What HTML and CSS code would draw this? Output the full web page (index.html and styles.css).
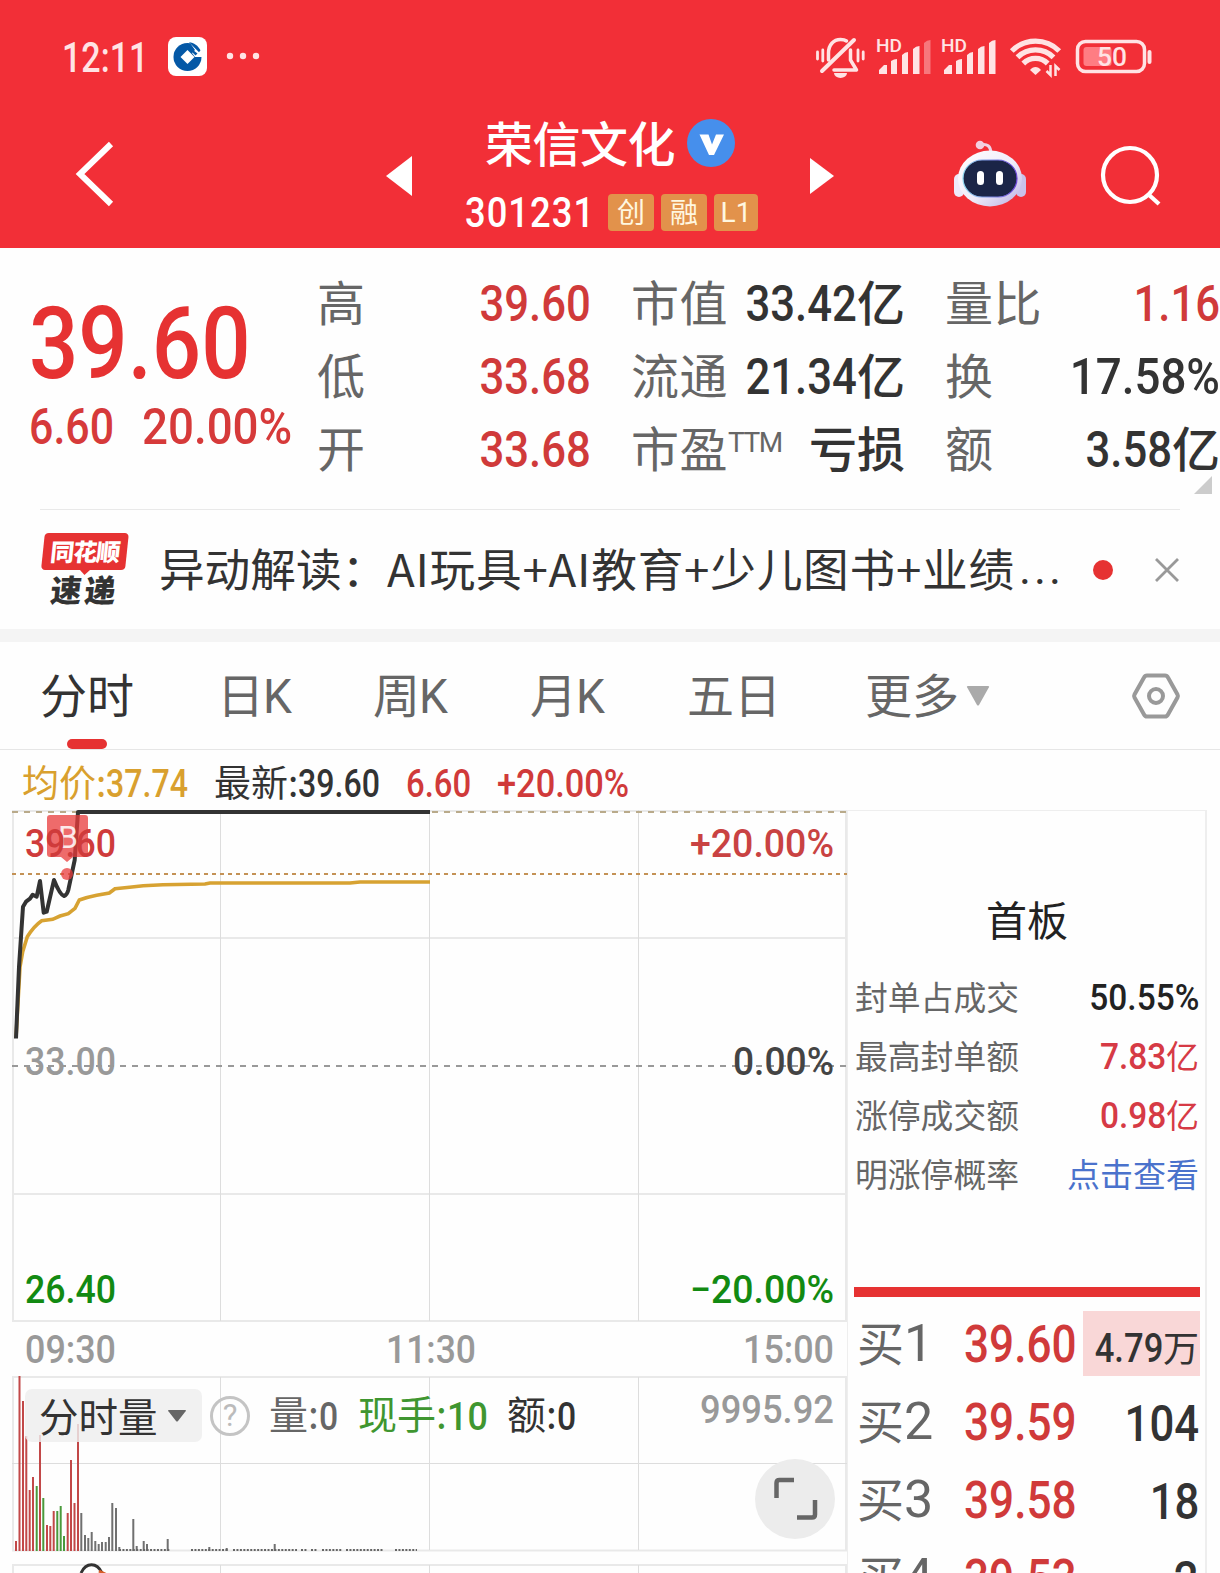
FILE: index.html
```html
<!DOCTYPE html>
<html lang="zh-CN">
<head>
<meta charset="utf-8">
<title>荣信文化 301231</title>
<link rel="stylesheet" href="styles.css">
</head>
<body>
<header class="header">
  <div class="status">
    <span class="clock"><span class="num">12:11</span></span>
    <svg class="bank" viewBox="0 0 39 39"><rect width="39" height="39" rx="8" fill="#fff"/><circle cx="19.5" cy="20" r="14" fill="#0458a6"/><path d="M19.500 13l7 7-7 7-7-7z" fill="#fff"/><path d="M20 3l15 1v16h-8l-3-4 3-3z" fill="#fff"/><path d="M21 5.300c5 .5 9 3.500 11.500 8l-1.500 2z" fill="#0458a6"/><path d="M16.500 6.500l13 10-2 2-6-6z" fill="#0458a6"/></svg>
    <svg class="dots" viewBox="0 0 34 8" fill="#ffe3e4"><circle cx="4" cy="4" r="3.200"/><circle cx="17" cy="4" r="3.200"/><circle cx="30" cy="4" r="3.200"/></svg>
    <svg class="status-icons" viewBox="0 0 340 48" fill="none" stroke="#ffe3e4">
      <g stroke-width="3.500" stroke-linecap="round"><path d="M6 36L38 5" stroke-width="4"/><path d="M12.500 25v-7c0-8 5-13.500 12-13.500q4 0 6 1.500M34.500 15v10l6 10H18" stroke-linejoin="round"/><path d="M1.500 17v7M6.800 15v11M42 15v11M47.200 17v7" stroke-width="2.800"/></g>
      <path d="M18 38h13a6.500 5 0 0 1-13 0z" fill="#ffe3e4" stroke="none"/>
      <g fill="#ffe3e4" stroke="none">
        <path d="M63 35l5-5h3v9h-8zM75 26q3-2 6-2v15h-6zM86 20q3-3 6-3v22h-6zM97 14q3-3 6.500-3v28H97z"/><path d="M108 8q3-3 6.500-3v34H108z" opacity=".4"/>
        <path d="M128 35l5-5h3v9h-8zM140 26q3-2 6-2v15h-6zM151 20q3-3 6-3v22h-6zM162 14q3-3 6.500-3v28H162zM173 8q3-3 6.500-3v34H173z"/>
      </g>
      <g fill="#ffe3e4" stroke="none" class="hd"><text x="60" y="17" textLength="26" lengthAdjust="spacingAndGlyphs">HD</text><text x="125" y="17" textLength="26" lengthAdjust="spacingAndGlyphs">HD</text></g>
      <g stroke-width="5.300"><path d="M195.800 16a33.500 33.500 0 0 1 47.400 0"/><path d="M201.500 22.300a25.500 25.500 0 0 1 36 0"/><path d="M207.300 28.500a17.300 17.300 0 0 1 24.400 0"/></g>
      <path d="M219.500 40l-5.500-5c3-4 8-4 11 0z" fill="#ffe3e4" stroke="none"/>
      <path d="M234.500 30v10l-4-4M239.500 41v-10l4 4" stroke-width="2.500"/>
      <rect x="261.500" y="6.500" width="67" height="30" rx="8" stroke-width="3.500"/>
      <rect x="267.500" y="12" width="28" height="19" rx="3" fill="#ff7d83" stroke="none"/>
      <path d="M333.500 17v10" stroke-width="4" stroke-linecap="round"/>
      <text class="battery" x="281" y="31" textLength="30" lengthAdjust="spacingAndGlyphs" fill="#ffe3e4" stroke="none">50</text>
    </svg>
  </div>
  <nav class="nav">
    <svg class="back" viewBox="0 0 40 66"><path d="M36 3L5 33l31 30" fill="none" stroke="#fff" stroke-width="6"/></svg>
    <svg class="prev" viewBox="0 0 26 40"><path d="M26 0v40L0 20z" fill="#fff"/></svg>
    <div class="stock">
      <div class="stock-name"><span>荣信文化</span><svg viewBox="0 0 48 48"><circle cx="24" cy="24" r="24" fill="#468fec"/><path d="M12.500 15.500h9l3.500 10 4-10h8L27 36h-5z" fill="#fff"/></svg></div>
      <div class="stock-code"><span class="code"><span class="num">301231</span></span><i>创</i><i>融</i><i class="level">L1</i></div>
    </div>
    <svg class="next" viewBox="0 0 24 36"><path d="M0 0v36l24-18z" fill="#fff"/></svg>
    <svg class="robot" viewBox="0 0 72 68">
      <defs><linearGradient id="shell" x1="0" y1="0" x2="1" y2="1"><stop offset="0" stop-color="#fff"/><stop offset=".55" stop-color="#f0ecfa"/><stop offset="1" stop-color="#b7aee2"/></linearGradient><linearGradient id="rim" x1="0" y1="0" x2="1" y2="0"><stop offset="0" stop-color="#8fd8f0"/><stop offset="1" stop-color="#6a42d8"/></linearGradient></defs>
      <path d="M26 5c7-2 11 1 11 9" fill="none" stroke="#efd3e6" stroke-width="3"/><circle cx="26" cy="5" r="4.300" fill="#f3cfe0"/>
      <rect x="0" y="34" width="10" height="23" rx="5" fill="#eee9fa"/><rect x="62" y="34" width="10" height="23" rx="5" fill="#c9c2ea"/>
      <ellipse cx="36" cy="38.500" rx="32" ry="28" fill="url(#shell)"/>
      <rect x="9" y="20" width="54" height="37" rx="19" fill="#1b2547" stroke="url(#rim)" stroke-width="1.200"/>
      <rect x="23" y="31" width="7" height="14" rx="3.500" fill="#fff"/><rect x="42" y="31" width="7" height="14" rx="3.500" fill="#fff"/>
    </svg>
    <svg class="search" viewBox="0 0 62 62" fill="none" stroke="#fff" stroke-width="4.200"><circle cx="30" cy="30" r="27"/><path d="M48 49l11 10"/></svg>
  </nav>
</header>

<section class="quote">
  <div class="last">
    <div class="price"><span class="num">39.60</span></div>
    <div class="change"><span class="num delta">6.60</span><span class="num wide">20.00%</span></div>
  </div>
  <dl class="facts">
    <dt>高</dt><dd class="up"><span class="num">39.60</span></dd><dt>市值</dt><dd><span class="num">33.42</span>亿</dd><dt>量比</dt><dd class="up"><span class="num">1.16</span></dd>
    <dt>低</dt><dd class="up"><span class="num">33.68</span></dd><dt>流通</dt><dd><span class="num">21.34</span>亿</dd><dt>换</dt><dd><span class="num wide">17.58%</span></dd>
    <dt>开</dt><dd class="up"><span class="num">33.68</span></dd><dt>市盈<sup>TTM</sup></dt><dd>亏损</dd><dt>额</dt><dd><span class="num">3.58</span>亿</dd>
  </dl>
  <svg class="corner" viewBox="0 0 18 18"><path d="M18 0v18H0z" fill="#ccc"/></svg>
</section>

<section class="news">
  <div class="brand"><b>同花顺</b><strong>速递</strong></div>
  <p><span class="topic">异动解读：</span><span class="reason">AI玩具+AI教育+少儿图书+业绩</span><span class="etc">...</span></p>
  <span class="unread"></span>
  <svg class="close" viewBox="0 0 26 26"><path d="M2 2l22 22M24 2L2 24" stroke="#999" stroke-width="2.800"/></svg>
</section>

<nav class="tabs">
  <span class="active">分时</span><span>日<em>K</em></span><span>周<em>K</em></span><span>月<em>K</em></span><span>五日</span><span>更多</span>
  <svg class="more" viewBox="0 0 22 20"><path d="M1 0h20q2 0 .5 2L12 19q-1 1-2 0L.5 2Q-1 0 1 0z" fill="#aaa"/></svg>
  <svg class="settings" viewBox="0 0 48 46" fill="none" stroke="#999" stroke-width="4"><path d="M15 2.500h18q2 0 3 2l9.500 17q.8 1.500 0 3L36 41.500q-1 2-3 2H15q-2 0-3-2L2.500 24.500q-.8-1.500 0-3L12 4.500q1-2 3-2z"/><circle cx="24" cy="23" r="7"/></svg>
</nav>

<div class="summary">
  <span class="avg">均价:<span class="num">37.74</span></span>
  <span class="now">最新:<span class="num">39.60</span></span>
  <span class="up diff"><span class="num">6.60</span></span>
  <span class="up"><span class="num wide">+20.00%</span></span>
</div>

<main class="board">
  <section class="charts">
    <svg class="plot" width="847" height="763" viewBox="0 810 847 763">
      <g fill="none" stroke="#e9e9e9" stroke-width="2">
        <path d="M12 811h835M12 938h835M12 1194h835M12 1321h835M12 1377h835M12 1550.500h835M12 1565h835"/>
        <path d="M13 810v511M13 1377v173M13 1564v9M846 810v511M846 1377v173M846 1564v9"/>
        <path d="M220.500 810v511M429.500 810v511M638.500 810v511M220.500 1377v173M429.500 1377v173M638.500 1377v173M220.500 1565v8M429.500 1565v8M638.500 1565v8M12 1463.500h835" stroke="#ddd" stroke-width="1"/>
      </g>
      <path d="M12 812h835" stroke="#b9aa8a" stroke-width="2" stroke-dasharray="6 6"/>
      <path d="M12 874h835" stroke="#c39155" stroke-width="2" stroke-dasharray="4 4"/>
      <path d="M12 1066h835" stroke="#999" stroke-width="2" stroke-dasharray="6 6"/>
      <g class="volume" fill="none" stroke-width="2">
        <path stroke="#c24848" d="M16 1551v-10M19.500 1551v-175M23 1551v-150M26.300 1551v-115M29.700 1551v-61M33 1551v-74M40 1551v-116M47 1551v-26M50.300 1551v-25M53.700 1551v-40M67.700 1551v-38M71 1551v-91M74.500 1551v-48M78 1551v-127"/>
        <path stroke="#4a9a3c" d="M36.700 1551v-65M43.300 1551v-53M57.300 1551v-40M60.700 1551v-45M64 1551v-15"/>
        <path stroke="#707070" d="M81.300 1551v-38M85 1551v-16M88.300 1551v-13M91.700 1551v-19M95.300 1551v-10M98.700 1551v-7M102 1551v-9M105.700 1551v-9M109 1551v-14M112.300 1551v-48M116 1551v-43M119.300 1551v-4M133.300 1551v-32M136.700 1551v-5M143.700 1551v-10M147 1551v-7M167.700 1551v-12M209.300 1551v-4M226.700 1551v-3M274.700 1551v-7"/>
        <path stroke="#666" d="M119 1550h51M191 1550h37M233 1550h64M301 1550h6M311 1550h6M322 1550h20M346 1550h37M395 1550h22" stroke-dasharray="2 1.450"/>
      </g>
      <path d="M16 1038L20 967L22.700 951.700L27.300 936.700Q34 926 41.700 920.700L52.700 919.300L60 916L68.300 913.700L75 908.300L79.300 900Q88 897 96.700 895.300L109.300 893L115 888.700Q130 887 143.300 885.700L163 884.700L205 884L210 883H350L360 882H430" fill="none" stroke="#d7a232" stroke-width="3.600"/>
      <path d="M16 1038.500L19 967L23 906.700L26 901.700L30 898.700L32.700 894.700L36.700 896.700L40 881L43.700 912.700L46.700 911.700L54 880Q60 895 64 896Q67 895 68.300 890L74.700 860L78 812H430" fill="none" stroke="#333" stroke-width="4" stroke-linejoin="round"/>
      <path d="M81 1573c5-11 16-11 21 0" fill="none" stroke="#333" stroke-width="3"/><path d="M99 1571l8 4" stroke="#d75d28" stroke-width="3"/>
      <g fill="#e93a3a" opacity=".75"><path d="M50 815h35q3 0 3 3v36q0 3-3 3h-12l-6 5-6-5H50q-3 0-3-3v-36q0-3 3-3z"/><circle cx="67" cy="874" r="6"/></g>
      <text x="58" y="848" font-size="32" fill="#fff" opacity=".85">B</text>
      <g class="axis">
        <text x="25" y="857" textLength="91" lengthAdjust="spacingAndGlyphs" fill="#cf3b3b">39.60</text>
        <text x="25" y="1075" textLength="91" lengthAdjust="spacingAndGlyphs" fill="#999">33.00</text>
        <text x="25" y="1303" textLength="91" lengthAdjust="spacingAndGlyphs" fill="#128a12">26.40</text>
        <text x="690" y="857" textLength="144" lengthAdjust="spacingAndGlyphs" fill="#c94242">+20.00%</text>
        <text x="733" y="1075" textLength="101" lengthAdjust="spacingAndGlyphs" fill="#444">0.00%</text>
        <text x="690" y="1303" textLength="144" lengthAdjust="spacingAndGlyphs" fill="#128a12">−20.00%</text>
        <g fill="#999"><text x="25" y="1363" textLength="91" lengthAdjust="spacingAndGlyphs">09:30</text><text x="386" y="1363" textLength="90" lengthAdjust="spacingAndGlyphs">11:30</text><text x="743" y="1363" textLength="91" lengthAdjust="spacingAndGlyphs">15:00</text><text x="700" y="1423" textLength="134" lengthAdjust="spacingAndGlyphs">9995.92</text></g>
      </g>
      <circle cx="795" cy="1499" r="40" fill="#ececec"/><path d="M776.500 1498v-15q0-3 3-3H794M797 1517.500h15q3 0 3-3V1500" fill="none" stroke="#666" stroke-width="4.500"/>
    </svg>
    <div class="indicator">
      <span class="chip"><span>分时量</span><svg viewBox="0 0 18 12"><path d="M1 0h16q2 0 0 2l-7 9q-1 1-2 0L1 2Q-1 0 1 0z" fill="#666"/></svg></span>
      <span class="help">?</span>
      <span class="vol">量:<span class="num">0</span></span>
      <span class="hand">现手:<span class="num">10</span></span>
      <span class="amount">额:<span class="num">0</span></span>
    </div>
  </section>
  <aside class="side">
    <h2>首板</h2>
    <dl class="limit">
      <dt>封单占成交</dt><dd><span class="num">50.55%</span></dd>
      <dt>最高封单额</dt><dd class="hot"><span class="num">7.83</span>亿</dd>
      <dt>涨停成交额</dt><dd class="hot"><span class="num">0.98</span>亿</dd>
      <dt>明涨停概率</dt><dd class="link">点击查看</dd>
    </dl>
    <div class="orders">
      <div class="order"><span class="lv">买<em>1</em></span><span class="bid"><span class="num">39.60</span></span><span class="qty big"><span class="num">4.79</span>万</span></div>
      <div class="order"><span class="lv">买<em>2</em></span><span class="bid"><span class="num">39.59</span></span><span class="qty"><span class="num">104</span></span></div>
      <div class="order"><span class="lv">买<em>3</em></span><span class="bid"><span class="num">39.58</span></span><span class="qty"><span class="num">18</span></span></div>
      <div class="order"><span class="lv">买<em>4</em></span><span class="bid"><span class="num">39.53</span></span><span class="qty"><span class="num">2</span></span></div>
    </div>
  </aside>
</main>
</body>
</html>
```
FILE: styles.css
```css
* { box-sizing: border-box; margin: 0; padding: 0; }
body { width: 1220px; height: 1573px; overflow: hidden; background: #fefefe; color: #333; font-family: "Noto Sans CJK SC", sans-serif; }
svg { display: block; flex: none; overflow: visible; }
i, em { font-style: normal; }
.num { display: inline-block; font-family: Roboto, sans-serif; font-weight: 500; transform: scaleX(.865); transform-origin: 0 50%; white-space: nowrap; }
.num.wide { transform: scaleX(.905); }
.up { color: #d03a3a; }

.header { height: 248px; background: #f22f37; color: #fff; }
.status { display: flex; align-items: center; height: 112px; padding-left: 62px; }
.clock { display: flex; width: 106px; padding-top: 4px; font-size: 42px; line-height: 42px; color: #ffe3e4; }
.clock .num { transform: scaleX(.81); }
.bank { width: 39px; height: 39px; }
.dots { width: 34px; height: 8px; margin-left: 19px; }
.status-icons { width: 340px; height: 48px; margin: 6px 0 0 556px; }
.hd { font: 500 18px Roboto, sans-serif; }
.battery { font: 500 26px Roboto, sans-serif; }
.nav { display: flex; height: 136px; }
.back { width: 40px; height: 66px; margin: 29px 0 0 75px; }
.prev { width: 26px; height: 40px; margin: 44px 0 0 271px; }
.stock { width: 345px; margin-left: 53px; }
.stock-name { display: flex; align-items: center; gap: 12px; height: 62px; padding-left: 20px; font-size: 48px; line-height: 62px; font-weight: 500; }
.stock-name span { width: 190px; margin-top: -4px; letter-spacing: -.5px; }
.stock-name svg { width: 48px; height: 48px; }
.stock-code { display: flex; align-items: center; gap: 7px; height: 76px; }
.code { display: flex; width: 136px; padding-top: 2px; font-size: 42px; line-height: 76px; }
.code .num { letter-spacing: 1.2px; }
.stock-code i { width: 46px; height: 37px; border-radius: 4px; background: #e2924b; color: #fff7e0; text-align: center; font-size: 28px; line-height: 34px; }
.stock-code .level { width: 44px; font-family: Roboto, sans-serif; line-height: 37px; }
.next { width: 24px; height: 36px; margin: 46px 0 0 0; }
.robot { width: 72px; height: 68px; margin: 28px 0 0 120px; }
.search { width: 62px; height: 62px; margin: 33px 0 0 74px; }

.quote { position: relative; display: flex; height: 261px; }
.last { width: 318px; padding: 44px 0 0 29px; color: #e63232; }
.price { display: flex; font-size: 101px; line-height: 104px; }
.price .num { transform: scaleX(.86); }
.change { display: flex; padding-top: 1px; font-size: 50.500px; line-height: 60px; color: #d63a3a; }
.delta { width: 113px; transform: scaleX(.85); }
.facts { display: grid; grid-template-columns: 110px 164px 196px 118px 160px 155px; grid-auto-rows: 73px; height: 240px; padding-top: 17px; font-size: 48px; line-height: 73px; }
.facts dt:nth-of-type(3n+2), .facts dt:nth-of-type(3n) { padding-left: 40px; letter-spacing: .5px; }
.facts dt { color: #666; white-space: nowrap; }
.facts dt, .facts dd { margin-top: -1px; }
.facts dd { display: flex; justify-content: flex-end; font-weight: 500; white-space: nowrap; }
.facts .num { padding-top: 3px; font-size: 50.500px; line-height: 73px; transform-origin: 100% 50%; }
.facts sup { display: inline-block; font: 28px/28px Roboto, sans-serif; letter-spacing: -1.5px; vertical-align: 15px; }
.corner { position: absolute; left: 1194px; top: 228px; width: 18px; height: 18px; }

.news { display: flex; align-items: center; height: 120px; margin: 0 40px; border-top: 1px solid #e9e9e9; }
.brand { width: 84px; height: 74px; margin: 0 34px 0 1px; transform: skewX(-6deg); text-align: center; }
.brand b { position: relative; display: block; height: 37px; border-radius: 4px; background: #e63232; color: #fff; font-size: 24px; font-weight: 900; line-height: 36px; letter-spacing: -1px; }
.brand b::after { content: ""; position: absolute; left: 38px; top: 36px; border: 6px solid transparent; border-top-color: #e63232; border-bottom: 0; }
.brand strong { display: block; padding-left: 8px; font-size: 31px; font-weight: 900; line-height: 38px; letter-spacing: 3px; }
.news p { display: flex; width: 935px; margin-top: -1px; font-size: 45.700px; line-height: 60px; white-space: nowrap; }
.topic { width: 228px; }
.reason { width: 632px; letter-spacing: .75px; }
.etc { font-family: Roboto, sans-serif; line-height: 64px; letter-spacing: 3px; }
.unread { width: 20px; height: 20px; border-radius: 50%; background: #e63232; }
.close { width: 26px; height: 26px; margin-left: 41px; }

.tabs { display: flex; height: 121px; border-top: 13px solid #f4f4f4; border-bottom: 1px solid #e6e6e6; padding-left: 40px; font-size: 47px; line-height: 101px; color: #666; }
.tabs span { width: 157px; }
.tabs em { display: inline-block; margin-left: -1px; font-family: Roboto, sans-serif; font-size: 49px; line-height: 1; transform: scaleX(.94); transform-origin: 0 50%; }
.tabs .active { position: relative; width: 177px; color: #333; }
.active::after { content: ""; position: absolute; left: 27px; bottom: 0; width: 40px; height: 10px; border-radius: 5px; background: #e63232; }
.tabs span:nth-child(2) { width: 156px; }
.tabs span:nth-child(5) { width: 178px; }
.tabs span:nth-child(6) { width: 98px; }
.tabs .more { width: 22px; height: 20px; margin: 44px 0 0 4px; }
.tabs .settings { width: 48px; height: 46px; margin: 31px 0 0 143px; }

.summary { display: flex; height: 60px; padding-left: 22px; font-size: 37px; line-height: 62px; white-space: nowrap; }
.summary .avg { width: 192px; color: #d9a02e; }
.summary .now { width: 192px; }
.summary .num { font-size: 38px; line-height: 1; }
.summary .avg .num, .summary .now .num { transform: scaleX(.845); }
.summary .diff { width: 91px; }

.board { display: flex; height: 763px; }
.charts { position: relative; width: 847px; }
.plot { font-family: Roboto, sans-serif; }
.axis { font-size: 39px; font-weight: 500; }
.indicator { position: absolute; left: 25px; top: 579px; display: flex; align-items: center; height: 53px; font-size: 39px; line-height: 53px; white-space: nowrap; }
.chip { display: flex; align-items: center; gap: 10px; width: 177px; height: 53px; padding-left: 14px; border-radius: 7px; background: rgba(238,238,238,.82); font-size: 39.500px; }
.chip span, .vol, .hand, .amount { margin-top: -3px; }
.indicator .num { position: relative; top: 1px; }
.chip svg { width: 18px; height: 12px; }
.help { width: 40px; height: 40px; margin-left: 8px; border: 3px solid #c4c4c4; border-radius: 50%; color: #bbb; text-align: center; font: 31px/34px Roboto, sans-serif; }
.vol { width: 89px; margin-left: 19px; color: #666; }
.hand { width: 149px; color: #3f9630; }
.hand .num { transform: scaleX(.92); }
.side { width: 360px; border: 2px solid #eee; border-width: 1px 2px 0 1px; padding: 71px 5px 0 6px; }
.side h2 { height: 72px; font-size: 41px; font-weight: 400; line-height: 72px; text-align: center; color: #222; }
.limit { display: grid; grid-template-columns: 190px 1fr; grid-auto-rows: 59px; margin-top: 13px; line-height: 58px; }
.limit dt { padding-left: 1px; font-size: 32.800px; color: #666; white-space: nowrap; }
.limit dd { display: flex; justify-content: flex-end; padding-right: 1px; font-size: 33px; color: #222; white-space: nowrap; }
.limit .num { padding-top: 2px; font-size: 36px; transform: scaleX(.93); transform-origin: 100% 50%; }
.limit .hot { color: #d63a45; }
.limit .link { color: #4a72cc; }
.orders { margin-top: 84px; border-top: 10px solid #e63232; padding-top: 7px; }
.order { display: flex; height: 78px; line-height: 74px; }
.lv { width: 110px; padding-left: 3px; font-size: 47px; color: #666; }
.lv em { font: 52px/1 Roboto, sans-serif; }
.bid { display: flex; width: 119px; padding-top: 2px; font-size: 51px; line-height: 78px; color: #d03a3a; }
.qty { flex: 1; display: flex; justify-content: flex-end; height: 65px; margin-top: 7px; padding-right: 1px; font-size: 50.500px; line-height: 69px; }
.qty .num { transform-origin: 100% 50%; }
.qty.big { background: #f9d7d7; font-size: 36px; line-height: 71px; }
.big .num { font-size: 40px; line-height: 76px; }
```
